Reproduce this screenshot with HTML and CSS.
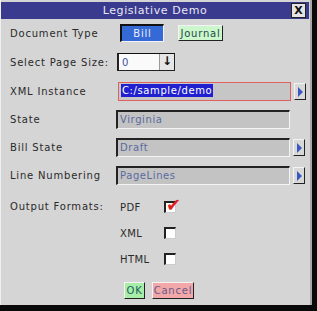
FILE: index.html
```html
<!DOCTYPE html>
<html lang="en">
<head>
    <meta charset="UTF-8">
    <title>Legislative Demo</title>
    <link rel="stylesheet" href="styles.css">
</head>
<body>
    <div class="window">
        <div class="titlebar">
            <span class="title">Legislative Demo</span>
            <span class="close">X</span>
        </div>

        <div class="form">
            <div class="row doc-type">
                <label>Document Type</label>
                <button class="btn bill">Bill</button>
                <button class="btn journal">Journal</button>
            </div>

            <div class="row page-size">
                <label>Select Page Size:</label>
                <div class="select">
                    <span class="value">0</span>
                    <span class="drop">&#8595;</span>
                </div>
            </div>

            <div class="row">
                <label>XML Instance</label>
                <div class="field focused"><span class="selected">C:/sample/demo</span></div>
                <span class="arrow"></span>
            </div>

            <div class="row">
                <label>State</label>
                <div class="field">Virginia</div>
            </div>

            <div class="row">
                <label>Bill State</label>
                <div class="field">Draft</div>
                <span class="arrow"></span>
            </div>

            <div class="row">
                <label>Line Numbering</label>
                <div class="field">PageLines</div>
                <span class="arrow"></span>
            </div>

            <div class="formats">
                <label>Output Formats:</label>
                <div class="checks">
                    <div class="check"><span>PDF</span><span class="box checked"></span></div>
                    <div class="check"><span>XML</span><span class="box"></span></div>
                    <div class="check"><span>HTML</span><span class="box"></span></div>
                </div>
            </div>

            <div class="actions">
                <button class="btn ok">OK</button>
                <button class="btn cancel">Cancel</button>
            </div>
        </div>
    </div>
</body>
</html>
```

FILE: styles.css
```css
* {
    margin: 0;
    padding: 0;
    box-sizing: border-box;
}

body {
    background: #0a0a0a;
    font-family: 'DejaVu Sans', sans-serif;
    font-size: 10px;
    color: #2a2a2a;
    width: 317px;
    height: 311px;
    overflow: hidden;
}

.window {
    width: 312px;
    height: 305px;
    background: #d5d5d5;
    border-left: 1px solid #f0f0f0;
    border-right: 2px solid #a8a8a8;
    padding-top: 2px;
}

.titlebar {
    height: 17px;
    background: #3a3a8e;
    display: flex;
    align-items: center;
    position: relative;
    margin-right: 1px;
}

.title {
    flex: 1;
    text-align: center;
    color: #e8e8f4;
    font-size: 11px;
    letter-spacing: 0.6px;
}

.close {
    position: absolute;
    right: 3px;
    top: 1px;
    width: 15px;
    height: 15px;
    background: #e4e4e4;
    border: 1px solid #222;
    font-weight: bold;
    font-size: 11px;
    text-align: center;
    line-height: 13px;
    color: #111;
}

.form {
    padding: 0 0 0 9px;
}

.row {
    display: flex;
    align-items: center;
    height: 28px;
}

.row.page-size {
    height: 30px;
}

.row label,
.formats label {
    width: 106px;
    letter-spacing: 0.8px;
}

.btn {
    font-family: inherit;
    font-size: 10px;
    letter-spacing: 0.8px;
    border: 1px solid #222;
    border-top-color: #f4f4f4;
    border-left-color: #f4f4f4;
    height: 17px;
}

.bill {
    width: 44px;
    margin-left: 4px;
    background: #3469d6;
    color: #eef;
    border-color: #111 #f4f4f4 #f4f4f4 #111;
    border-width: 2px 1px 1px 2px;
    height: 18px;
}

.journal {
    width: 45px;
    margin-left: 14px;
    background: #ccf7cc;
    color: #1d4a4a;
    height: 16px;
}

.select {
    display: flex;
    align-items: center;
    width: 58px;
    height: 18px;
    margin-left: 1px;
    background: #fafafa;
    border: 1px solid #222;
    border-top-color: #111;
    border-left-width: 2px;
}

.select .value {
    flex: 1;
    padding-left: 3px;
    color: #4050a0;
}

.drop {
    width: 15px;
    height: 16px;
    border-left: 1px solid #999;
    font-weight: bold;
    font-size: 12px;
    text-align: center;
    line-height: 15px;
    color: #111;
    background: #e6e6e6;
}

.field {
    width: 174px;
    height: 19px;
    background: #c3c3c3;
    border: 2px solid #222;
    border-right-color: #f4f4f4;
    border-bottom-color: #f4f4f4;
    border-right-width: 1px;
    border-bottom-width: 1px;
    padding-left: 2px;
    line-height: 15px;
    color: #5b6aa0;
    letter-spacing: 0.6px;
}

.field.focused {
    border: 1px solid #e06060;
    margin-left: 2px;
    width: 173px;
    padding-left: 2px;
    background: #c6c6c6;
}

.selected {
    background: #2020d0;
    color: #fff;
    padding: 1px 1px;
}

.arrow {
    width: 12px;
    height: 17px;
    margin-left: 3px;
    background: #d8d8d8;
    border: 1px solid #222;
    border-top-color: #f4f4f4;
    border-left-color: #f4f4f4;
    position: relative;
}

.arrow::after {
    content: '';
    position: absolute;
    left: 3px;
    top: 3px;
    border-left: 5px solid #3a58c0;
    border-top: 5px solid transparent;
    border-bottom: 5px solid transparent;
}

.formats {
    display: flex;
    margin-top: 10px;
}

.formats label {
    padding-top: 2px;
}

.checks {
    display: flex;
    flex-direction: column;
    gap: 10px;
    margin-left: 4px;
}

.check {
    display: flex;
    align-items: center;
    height: 16px;
    letter-spacing: 0.4px;
}

.check span:first-child {
    width: 44px;
}

.box {
    width: 12px;
    height: 12px;
    background: #fff;
    border: 2px solid #222;
    border-right: 1px solid #ccc;
    border-bottom: 1px solid #ccc;
    position: relative;
}

.box.checked::after {
    content: '\2714';
    position: absolute;
    left: 0;
    top: -9px;
    color: #e02020;
    font-size: 18px;
}

.actions {
    display: flex;
    gap: 7px;
    margin: 15px 0 0 114px;
}

.ok {
    width: 21px;
    background: #a8eea8;
    color: #206060;
}

.cancel {
    width: 42px;
    background: #f2a8a8;
    color: #6a5a8a;
}
```
